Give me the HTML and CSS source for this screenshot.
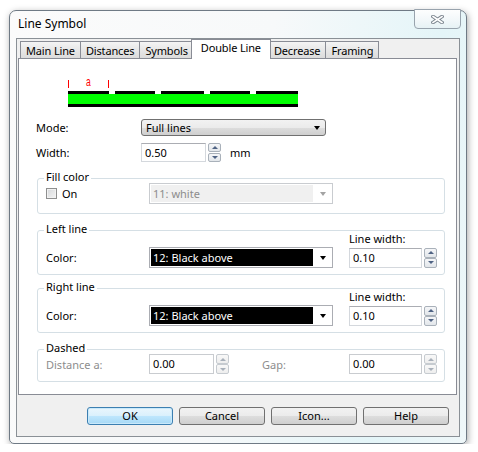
FILE: index.html
```html
<!DOCTYPE html>
<html>
<head>
<meta charset="utf-8">
<title>Line Symbol</title>
<link rel="stylesheet" href="styles.css">
</head>
<body>
<div class="window">
  <div class="titlebar">
    <span class="title">Line Symbol</span>
    <button class="close" aria-label="Close">
      <svg width="13" height="9" viewBox="0 0 13 9">
        <path d="M2 1.5 L11 7.5 M11 1.5 L2 7.5" stroke="#7d8790" stroke-width="3.6" stroke-linecap="square" fill="none"/>
        <path d="M2 1.5 L11 7.5 M11 1.5 L2 7.5" stroke="#ffffff" stroke-width="1.6" stroke-linecap="square" fill="none"/>
      </svg>
    </button>
  </div>

  <div class="client">
    <div class="tabs">
      <div class="tab">Main Line</div>
      <div class="tab">Distances</div>
      <div class="tab">Symbols</div>
      <div class="tab active">Double Line</div>
      <div class="tab">Decrease</div>
      <div class="tab">Framing</div>
    </div>

    <div class="panel">
      <!-- double line preview: dashed top line, green fill, solid bottom line -->
      <svg class="preview" width="240" height="36" viewBox="0 0 240 36">
        <rect x="2" y="8" width="1" height="8" fill="#ff0000"/>
        <rect x="42" y="8" width="1" height="8" fill="#ff0000"/>
        <text transform="translate(20 13.5) scale(0.85 1.25)" font-family="Liberation Sans, sans-serif" font-size="10" fill="#ff0000">a</text>
        <rect x="2" y="19" width="41" height="3" fill="#000"/>
        <rect x="49" y="19" width="40" height="3" fill="#000"/>
        <rect x="95" y="19" width="43" height="3" fill="#000"/>
        <rect x="144" y="19" width="40" height="3" fill="#000"/>
        <rect x="190" y="19" width="42" height="3" fill="#000"/>
        <rect x="2" y="22" width="230" height="10" fill="#00ff00"/>
        <rect x="2" y="32" width="230" height="3" fill="#000"/>
      </svg>

      <div class="field-row mode-row">
        <span class="lbl">Mode:</span>
        <div class="dropbtn"><span>Full lines</span><i class="tri"></i></div>
      </div>

      <div class="field-row width-row">
        <span class="lbl">Width:</span>
        <div class="textbox w65">0.50</div>
        <div class="spin"><span class="up"></span><span class="down"></span></div>
        <span class="unit">mm</span>
      </div>

      <div class="group fill-group">
        <div class="legend">Fill color</div>
        <div class="grow">
          <label class="check-lbl"><span class="checkbox"></span>On</label>
          <div class="combo disabled"><span class="val">11: white</span><i class="tri"></i></div>
        </div>
      </div>

      <div class="group line-group">
        <div class="legend">Left line</div>
        <div class="lw-head">Line width:</div>
        <div class="grow">
          <span class="glbl">Color:</span>
          <div class="combo"><span class="val black">12: Black above</span><i class="tri"></i></div>
          <div class="textbox w73 gap16">0.10</div>
          <div class="spin tall"><span class="up"></span><span class="down"></span></div>
        </div>
      </div>

      <div class="group line-group right-group">
        <div class="legend">Right line</div>
        <div class="lw-head">Line width:</div>
        <div class="grow">
          <span class="glbl">Color:</span>
          <div class="combo"><span class="val black">12: Black above</span><i class="tri"></i></div>
          <div class="textbox w73 gap16">0.10</div>
          <div class="spin tall"><span class="up"></span><span class="down"></span></div>
        </div>
      </div>

      <div class="group dashed-group">
        <div class="legend">Dashed</div>
        <div class="grow">
          <span class="glbl dim">Distance a:</span>
          <div class="textbox w65 off">0.00</div>
          <div class="spin tall off"><span class="up"></span><span class="down"></span></div>
          <span class="gap-lbl dim">Gap:</span>
          <div class="textbox w73 off">0.00</div>
          <div class="spin tall off"><span class="up"></span><span class="down"></span></div>
        </div>
      </div>
    </div>

    <div class="buttons">
      <button class="btn default">OK</button>
      <button class="btn">Cancel</button>
      <button class="btn">Icon...</button>
      <button class="btn">Help</button>
    </div>
  </div>
</div>
</body>
</html>
```

FILE: styles.css
```css
body {
  margin: 0;
  background: #ffffff;
  font-family: "Noto Sans", "Open Sans", sans-serif;
  font-size: 11px;
  color: #000;
}

/* ---------- window frame ---------- */
.window {
  margin: 10px 0 0 9px;
  width: 458px;
  height: 434px;
  box-sizing: border-box;
  border: 1px solid #6f7a85;
  border-radius: 7px 7px 5px 5px;
  background: linear-gradient(100deg, #fbfbfb 0%, #f7f9fa 50%, #e4f5f8 82%, #eff7f9 100%);
  box-shadow: 1px 2px 7px rgba(0, 0, 0, 0.35);
  padding: 0 6px 6px;
  display: flex;
  flex-direction: column;
}

.titlebar {
  height: 27px;
  display: flex;
  justify-content: space-between;
  align-items: flex-start;
}

.title {
  margin: 5px 0 0 2px;
  font-size: 12px;
  line-height: 16px;
}

.close {
  margin: -2px -1px 0 0;
  width: 47px;
  height: 20px;
  padding: 0;
  border: 1px solid #98a3ad;
  border-radius: 0 0 4px 4px;
  background: linear-gradient(#fdfefe, #f1f7f9 60%, #e6f2f5);
  display: flex;
  align-items: center;
  justify-content: center;
}

.client {
  flex: 1;
  border: 1px solid #8a9096;
  background: #f0f0f0;
  display: flex;
  flex-direction: column;
  min-height: 0;
}

/* ---------- tabs ---------- */
.tabs {
  display: flex;
  align-items: flex-end;
  height: 19px;
  padding-left: 3px;
}

.tab {
  height: 17px;
  box-sizing: border-box;
  border: 1px solid #898c95;
  border-bottom: none;
  margin-right: -1px;
  padding: 1px 5px 0;
  line-height: 16px;
  letter-spacing: -0.15px;
  background: linear-gradient(#f4f4f4, #e6e6e6 55%, #dcdcdc);
  white-space: nowrap;
}

.tab.active {
  height: 20px;
  margin: 0 -3px -1px -2px;
  padding: 0 9px 3px;
  background: #ffffff;
  position: relative;
  z-index: 1;
}

.panel {
  margin: 0 2px 0 1px;
  height: 337px;
  box-sizing: border-box;
  border: 1px solid #898c95;
  background: #ffffff;
}

.preview {
  display: block;
  margin: 13px 0 0 47px;
}

/* ---------- generic fields ---------- */
.field-row {
  display: flex;
  align-items: center;
  margin-left: 17px;
}

.mode-row {
  margin-top: 11px;
  height: 17px;
}

.width-row {
  margin-top: 7px;
  height: 19px;
}

.lbl {
  width: 105px;
}

.dropbtn {
  width: 185px;
  height: 17px;
  box-sizing: border-box;
  border: 1px solid #707070;
  border-radius: 3px;
  background: linear-gradient(#f2f2f2, #ebebeb 50%, #dddddd 51%, #cfcfcf);
  display: flex;
  align-items: center;
  justify-content: space-between;
  padding: 0 5px 0 4px;
}

.tri {
  width: 0;
  height: 0;
  border-left: 3.5px solid transparent;
  border-right: 3.5px solid transparent;
  border-top: 4px solid #000;
}

.textbox {
  height: 19px;
  box-sizing: border-box;
  border: 1px solid #d4d8dd;
  border-top-color: #abadb3;
  background: #fff;
  padding: 0 3px;
  line-height: 17px;
}

.w65 { width: 65px; }
.w73 { width: 73px; }
.gap16 { margin-left: 16px; }

.spin {
  width: 13px;
  height: 19px;
  margin-left: 2px;
  display: flex;
  flex-direction: column;
  justify-content: space-between;
}

.spin span {
  height: 9px;
  box-sizing: border-box;
  border: 1px solid #a9b1ba;
  border-radius: 2px;
  background: linear-gradient(#f5f6f8, #e2e6ea);
  display: flex;
  align-items: center;
  justify-content: center;
}

.spin.tall { height: 20px; }
.spin.tall span { height: 10px; }

.spin .up::before,
.spin .down::before {
  content: "";
  width: 0;
  height: 0;
  border-left: 3px solid transparent;
  border-right: 3px solid transparent;
}

.spin .up::before { border-bottom: 3px solid #4f6384; }
.spin .down::before { border-top: 3px solid #4f6384; }

.spin.off span {
  border-color: #c6cbd0;
  background: linear-gradient(#f8f8f8, #eeeeee);
}

.spin.off .up::before { border-bottom-color: #a8b0ba; }
.spin.off .down::before { border-top-color: #a8b0ba; }

.unit {
  margin-left: 9px;
}

/* ---------- group boxes ---------- */
.group {
  margin: 16px 0 0 18px;
  width: 408px;
  box-sizing: border-box;
  border: 1px solid #d5dfe5;
  border-radius: 3px;
  padding: 0 0 0 8px;
}

.legend {
  width: fit-content;
  margin: -9px 0 -5px -2px;
  padding: 0 2px;
  line-height: 14px;
  background: #fff;
}

.grow {
  display: flex;
  align-items: center;
}

.fill-group .grow {
  margin-top: 4px;
  height: 21px;
  padding-bottom: 9px;
}

.check-lbl {
  width: 103px;
  display: flex;
  align-items: center;
}

.checkbox {
  width: 11px;
  height: 11px;
  box-sizing: border-box;
  border: 1px solid #8e8f8f;
  background: linear-gradient(135deg, #d6d8db, #f4f4f4);
  box-shadow: inset 0 0 0 1px #f2f2f2;
  margin-right: 5px;
}

.combo {
  width: 184px;
  height: 21px;
  box-sizing: border-box;
  border: 1px solid #abadb3;
  background: #fff;
  display: flex;
  align-items: center;
  padding: 1px 6px 1px 1px;
}

.combo .val {
  flex: 1;
  height: 100%;
  line-height: 18px;
  padding-left: 2px;
  margin-right: 7px;
}

.combo .val.black {
  background: #000;
  color: #fff;
}

.combo.disabled {
  border-color: #c9ccd0;
}

.combo.disabled .val {
  background: #f0f0f0;
  color: #8d8d8d;
}

.combo.disabled .tri {
  border-top-color: #a3a3a3;
}

.lw-head {
  margin: 1px 0 0 303px;
  line-height: 14px;
}

.line-group .grow {
  margin-top: 1px;
  height: 21px;
  padding-bottom: 6px;
}

.line-group .textbox {
  height: 20px;
}

.right-group {
  margin-top: 13px;
}

.glbl {
  width: 103px;
}

.dim {
  color: #8d8d8d;
}

.dashed-group {
  margin-top: 16px;
}

.dashed-group .grow {
  margin-top: 4px;
  height: 20px;
  padding-bottom: 7px;
}

.dashed-group .textbox {
  height: 20px;
  border-color: #c9ccd0;
}

.gap-lbl {
  margin-left: 33px;
  width: 87px;
}

/* ---------- dialog buttons ---------- */
.buttons {
  display: flex;
  gap: 6px;
  padding: 12px 0 0 70px;
}

.btn {
  width: 86px;
  height: 18px;
  box-sizing: border-box;
  border: 1px solid #707070;
  border-radius: 3px;
  background: linear-gradient(#f2f2f2, #ebebeb 50%, #dddddd 51%, #cfcfcf);
  font-family: inherit;
  font-size: 11px;
  color: #000;
  padding: 0;
  line-height: 16px;
}

.btn.default {
  border-color: #3c7fb1;
  background: linear-gradient(#eaf6fd, #d9f0fc 50%, #bee6fd 51%, #a7d9f5);
  box-shadow: inset 0 0 0 1px #c9e9fb;
}
```
